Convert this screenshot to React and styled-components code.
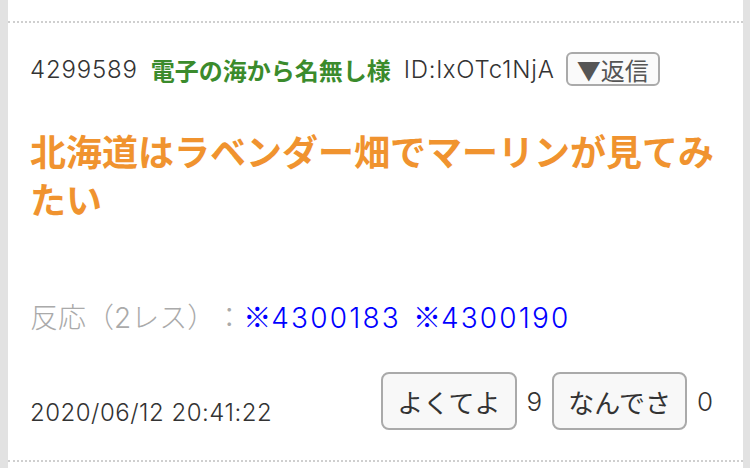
import React from "react";
import styled, { createGlobalStyle } from "styled-components";

const Global = createGlobalStyle`
  html, body { margin: 0; padding: 0; background: #e2e2e2; }
  body {
    font-family: "Inter", "Noto Sans CJK JP", sans-serif;
    text-spacing-trim: space-all;
  }
`;

const Panel = styled.div`
  margin: 0 7px 0 8px;
  min-height: 468px;
  background: #fff;
  padding-top: 21px;
  box-sizing: border-box;
`;

const Post = styled.article`
  border-top: 2px dotted #cfcfcf;
  border-bottom: 2px dotted #cfcfcf;
  padding: 28px 22px 30px 22px;
`;

const Header = styled.div`
  display: flex;
  align-items: center;
  gap: 13px;
  height: 36px;
  font-size: 24px;
  color: #333;
  white-space: nowrap;
`;

const Latin = styled.span`
  font-weight: 300;
  letter-spacing: 0.8px;
`;

const Name = styled.span`
  color: #3b8b2c;
  font-weight: 700;
  font-family: "Noto Sans CJK JP", sans-serif;
`;

const ReplyButton = styled.button`
  font-family: "Noto Sans CJK JP", sans-serif;
  font-size: 24px;
  color: #555;
  background: #fafafa;
  border: 2px solid #aaa;
  border-radius: 6px;
  height: 34px;
  padding: 0 9px;
  margin-left: -2px;
  display: flex;
  align-items: center;
`;

const Title = styled.h2`
  margin: 39px 0 0 0;
  font-family: "Noto Sans CJK JP", sans-serif;
  font-weight: 700;
  font-size: 36px;
  line-height: 48px;
  color: #f0932f;
`;

const Reactions = styled.div`
  margin-top: 74px;
  font-size: 28px;
  line-height: 40px;
  color: #aaa;
  white-space: nowrap;
  font-weight: 300;
`;

const RefLink = styled.a`
  color: #0000ff;
  text-decoration: none;
  letter-spacing: 2.2px;
  margin-right: 12px;
`;

const Mark = styled.span`
  font-family: "Noto Sans CJK JP", sans-serif;
  font-weight: 400;
  letter-spacing: 0;
`;

const Footer = styled.div`
  margin-top: 34px;
  display: flex;
  justify-content: space-between;
  align-items: flex-end;
`;

const DateText = styled.span`
  font-size: 24px;
  font-weight: 300;
  letter-spacing: 0.5px;
  color: #333;
  line-height: 30px;
  padding-bottom: 2px;
`;

const Votes = styled.div`
  display: flex;
  align-items: center;
`;

const VoteButton = styled.button`
  font-family: "Noto Sans CJK JP", sans-serif;
  font-size: 26px;
  color: #333;
  background: #f8f8f8;
  border: 2px solid #aaa;
  border-radius: 8px;
  height: 58px;
  padding: 0 14px;
  box-sizing: border-box;
`;

const Count = styled.span`
  font-size: 26px;
  font-weight: 300;
  color: #333;
  margin: 0 ${(p) => (p.$last ? "8px" : "10px")} 0 10px;
`;

export default function App() {
  return (
    <>
      <Global />
      <Panel>
        <Post>
          <Header>
            <Latin>4299589</Latin>
            <Name>電子の海から名無し様</Name>
            <Latin>ID:lxOTc1NjA</Latin>
            <ReplyButton>▼返信</ReplyButton>
          </Header>
          <Title>北海道はラベンダー畑でマーリンが見てみたい</Title>
          <Reactions>
            反応（2レス）：
            <RefLink href="#"><Mark>※</Mark>4300183</RefLink>
            <RefLink href="#"><Mark>※</Mark>4300190</RefLink>
          </Reactions>
          <Footer>
            <DateText>2020/06/12 20:41:22</DateText>
            <Votes>
              <VoteButton>よくてよ</VoteButton>
              <Count>9</Count>
              <VoteButton>なんでさ</VoteButton>
              <Count $last>0</Count>
            </Votes>
          </Footer>
        </Post>
      </Panel>
    </>
  );
}
